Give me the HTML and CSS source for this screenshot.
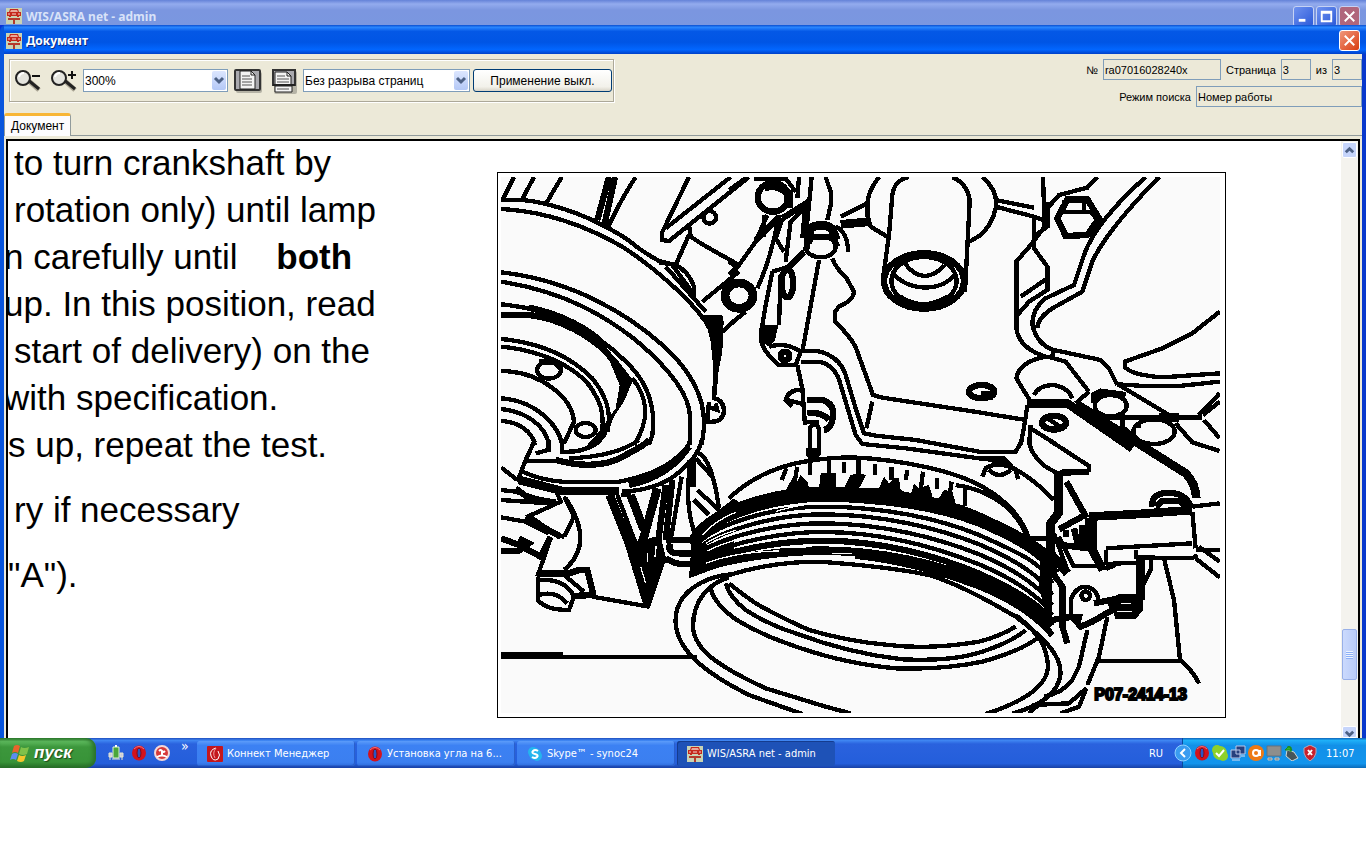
FILE: index.html
```html
<!DOCTYPE html>
<html lang="ru">
<head>
    <meta charset="UTF-8">
    <meta name="viewport" content="width=device-width, initial-scale=1.0">
    <title>WIS/ASRA net - admin</title>
    <link rel="stylesheet" href="styles.css">
</head>
<body>
    <svg class="defs" width="0" height="0" aria-hidden="true">
        <symbol id="car" viewBox="0 0 16 16">
            <rect width="16" height="16" fill="#c9d3b4"/>
            <path d="M4 1h8l1 3h2v4h-2v1h-2V8H5v1H3V8H1V4h2z" fill="#c5281c"/>
            <path d="M5 2h6l1 2H4z" fill="#e9a79a"/>
            <path d="M2 6h2M12 6h2M6 6h4" stroke="#f6d8d0" stroke-width="1"/>
            <path d="M2 11h12M8 11v5" stroke="#b53a2c" stroke-width="2"/>
        </symbol>
        <symbol id="opera" viewBox="0 0 16 16">
            <ellipse cx="8" cy="8" rx="7" ry="7.500" fill="#d3121c"/>
            <path d="M3 4q5-5 10 0" stroke="#f0777c" fill="none"/>
            <ellipse cx="8" cy="8" rx="2" ry="5" fill="#2b55c4"/>
            <ellipse cx="8" cy="8" rx="2" ry="5" fill="none" stroke="#8d0811"/>
        </symbol>
        <symbol id="chevron" viewBox="0 0 14 17">
            <path d="M3 6l4 4 4-4" fill="none" stroke="#4d6185" stroke-width="3"/>
        </symbol>
        <symbol id="cross" viewBox="0 0 20 20">
            <path d="M5 5l10 10M15 5L5 15" stroke="#fff" stroke-width="2"/>
        </symbol>
    </svg>

    <div class="desktop">
        <header class="titlebar titlebar-back">
            <svg class="icon"><use href="#car"/></svg>
            <span class="title">WIS/ASRA net - admin</span>
            <button class="win-btn" type="button" aria-label="Свернуть"><svg viewBox="0 0 20 20"><path d="M5 14h7" stroke="#fff" stroke-width="3"/></svg></button>
            <button class="win-btn" type="button" aria-label="Развернуть"><svg viewBox="0 0 20 20"><path d="M5 5h10v10H5zM5 6h10" fill="none" stroke="#fff" stroke-width="2"/></svg></button>
            <button class="win-btn win-close" type="button" aria-label="Закрыть"><svg><use href="#cross"/></svg></button>
        </header>

        <main class="window">
            <header class="titlebar">
                <svg class="icon"><use href="#car"/></svg>
                <h1 class="title">Документ</h1>
                <button class="win-btn win-close" type="button" aria-label="Закрыть"><svg><use href="#cross"/></svg></button>
            </header>

            <div class="content">
                <div class="head">
                    <div class="toolbar">
                        <button class="tool" type="button" aria-label="Уменьшить">
                            <svg viewBox="0 0 30 26"><path d="M16 13l10 9" stroke="#aaa595" stroke-width="5"/><path d="M15 12l11 9" stroke="#222" stroke-width="3"/><circle cx="10" cy="10" r="7" fill="#e4e4de" stroke="#222" stroke-width="2"/><path d="M6 9q1-4 5-4" stroke="#fff" stroke-width="2" fill="none"/><path d="M19 8h8" stroke="#111" stroke-width="2"/></svg>
                        </button>
                        <button class="tool" type="button" aria-label="Увеличить">
                            <svg viewBox="0 0 30 26"><path d="M16 13l10 9" stroke="#aaa595" stroke-width="5"/><path d="M15 12l11 9" stroke="#222" stroke-width="3"/><circle cx="10" cy="10" r="7" fill="#e4e4de" stroke="#222" stroke-width="2"/><path d="M6 9q1-4 5-4" stroke="#fff" stroke-width="2" fill="none"/><path d="M19 7h8M23 3v8" stroke="#111" stroke-width="2"/></svg>
                        </button>
                        <span class="combo combo-zoom">
                            <select aria-label="Масштаб"><option>300%</option></select>
                            <svg class="arrow"><use href="#chevron"/></svg>
                        </span>
                        <button class="tool tool-page" type="button" aria-label="Одна страница">
                            <svg viewBox="0 0 30 26"><rect x="3" y="4" width="26" height="21" rx="2" fill="#b5b3a6"/><rect x="2" y="2" width="25" height="20" rx="1" fill="#a9a9ae" stroke="#333" stroke-width="2"/><path d="M7 3h11l4 4v14H7z" fill="#f4f4f4" stroke="#222"/><path d="M18 3v4h4" fill="none" stroke="#222"/><path d="M9 8h8M9 11h10M9 14h10M9 17h10" stroke="#555"/></svg>
                        </button>
                        <button class="tool tool-page" type="button" aria-label="Непрерывно">
                            <svg viewBox="0 0 30 26"><rect x="5" y="3" width="23" height="23" rx="2" fill="#b5b3a6"/><rect x="4" y="2" width="22" height="15" fill="#a9a9ae" stroke="#333" stroke-width="2"/><path d="M6 4h12l4 4v9H6zM6 18h17v6H6z" fill="#f4f4f4" stroke="#222"/><path d="M18 4v4h4" fill="none" stroke="#222"/><path d="M8 8h8M8 11h12M8 14h12M8 21h12" stroke="#555"/><path d="M4 17h22" stroke="#222" stroke-width="2"/></svg>
                        </button>
                        <span class="combo combo-break">
                            <select aria-label="Разрыв страниц"><option>Без разрыва страниц</option></select>
                            <svg class="arrow"><use href="#chevron"/></svg>
                        </span>
                        <button class="apply" type="button">Применение выкл.</button>
                    </div>

                    <form class="info">
                        <div class="info-row">
                            <label for="number">№</label>
                            <input class="w-number" id="number" type="text" value="ra07016028240x" readonly>
                            <label for="page">Страница</label>
                            <input class="w-page" id="page" type="text" value="3" readonly>
                            <label for="total">из</label>
                            <input class="w-page" id="total" type="text" value="3" readonly>
                        </div>
                        <div class="info-row">
                            <label for="mode">Режим поиска</label>
                            <input class="w-mode" id="mode" type="text" value="Номер работы" readonly>
                        </div>
                    </form>
                </div>

                <nav class="tabs"><a class="tab" href="#document">Документ</a></nav>

                <div class="viewer" id="document">
                    <article class="page">
                        <div class="text">
                            <p>
                                <span class="line">to turn crankshaft by</span>
                                <span class="line">rotation only) until lamp</span>
                                <span class="line cut">n carefully until &nbsp;&nbsp; <b>both</b></span>
                                <span class="line cut">up. In this position, read</span>
                                <span class="line">start of delivery) on the</span>
                                <span class="line cut">with specification.</span>
                                <span class="line flush">s up, repeat the test.</span>
                            </p>
                            <p><span class="line">ry if necessary</span></p>
                            <p><span class="line flush">"A").</span></p>
                        </div>

                        <svg class="figure" viewBox="24 21 2187 1638" role="img" aria-label="P07-2414-13">
                            <defs>
                                <clipPath id="plate"><rect x="36" y="36" width="2157" height="1608"/></clipPath>
                            </defs>
                            <rect x="24" y="21" width="2187" height="1638" fill="#fff"/>
                            <rect x="36" y="36" width="2157" height="1608" fill="#fafafa"/>
                            <g class="ink" clip-path="url(#plate)">
                                <!-- flywheel, upper left -->
                                <g>
                                    <path d="M75 36L42 102M135 36L100 102M218 36L170 118M440 36Q395 105 358 185"/>
                                    <path class="bold" d="M360 36L325 165M378 36L345 185"/>
                                    <path d="M36 105H100Q150 110 190 122Q260 140 330 175T430 235T510 288L560 300"/>
                                    <path d="M36 132C200 140 330 205 400 245C500 310 600 400 650 470C690 530 680 600 675 700"/>
                                    <path d="M510 292L560 300Q600 320 615 365V395M530 305L650 440M550 300L612 385"/>
                                    <path class="solid" d="M645 450H700L704 470L700 560L690 612L672 600L665 530Z"/>
                                    <path d="M684 600L675 700Q705 705 705 740Q700 775 655 770L660 710M658 725L685 735L680 715"/>
                                    <path d="M600 36L518 205V225L540 228L780 36M725 36L530 190M600 180L605 215L640 238L750 300M600 210L560 300M640 410L750 320M700 500L750 455"/>
                                    <circle cx="662" cy="157" r="19"/>
                                    <path d="M36 322C250 345 420 450 520 540C610 620 650 700 645 790L638 840"/>
                                    <path d="M36 350C230 380 350 455 440 525C540 610 605 690 603 760V840"/>
                                    <path d="M36 418C200 430 340 520 400 580C475 645 502 720 490 810L480 840"/>
                                    <path class="bold" d="M36 450H120C220 460 310 520 350 560C380 590 400 630 405 650"/>
                                    <path d="M120 425C220 445 300 490 340 530M430 640C480 700 480 770 435 840"/>
                                    <path class="solid" d="M350 560L385 585L432 645L405 710L375 755L350 815L320 845H290L330 800L380 730L392 660Z"/>
                                    <path d="M36 522C180 535 260 590 310 640C350 690 370 740 355 800"/>
                                    <path d="M36 545C150 555 250 600 300 660C335 710 345 740 340 800"/>
                                    <ellipse cx="180" cy="615" rx="36" ry="26"/>
                                    <path class="bold" d="M150 590H195L218 610"/>
                                    <path d="M36 618C160 620 250 700 255 770L225 835"/>
                                    <path d="M36 700C130 705 205 770 220 840M36 732C110 740 170 780 180 840M36 768C90 770 130 800 138 840"/>
                                    <ellipse cx="290" cy="795" rx="30" ry="21"/>
                                </g>

                                <!-- bracket and bolts, upper centre -->
                                <g transform="translate(720 0)">
                                    <path d="M0 75L55 36M75 40H170L200 80M210 36L205 100M248 36L232 200M290 36L305 80V120L295 165"/>
                                    <ellipse class="bold" cx="132" cy="97" rx="46" ry="43"/>
                                    <path class="heavy" d="M105 68Q140 50 178 85V130"/>
                                    <path d="M115 150L80 230L30 300L0 330M105 150V215M150 150Q130 270 85 370M0 290L30 310M0 480L50 440"/>
                                    <path class="bold" d="M240 110L160 160M150 155L80 225"/>
                                    <path d="M160 160L140 220L165 260M225 130L185 170L170 290M228 130L220 220M130 320L110 420L100 480M225 260L180 305L130 320M155 330L150 480"/>
                                    <path class="bold" d="M225 262L175 310"/>
                                    <ellipse class="bold" cx="175" cy="355" rx="18" ry="42"/>
                                    <ellipse cx="275" cy="245" rx="45" ry="32"/>
                                    <path class="heavy" d="M237 235L243 190Q280 170 310 192L322 225"/>
                                    <path class="bold" d="M230 260L240 215H310L325 245"/>
                                    <path d="M320 185Q355 200 358 260M270 285L220 560"/>
                                    <path d="M310 280Q320 310 350 335L375 380Q375 405 330 425L318 440V470Q375 525 385 560L432 690L460 698L750 742L890 765M430 710L412 790"/>
                                    <path class="solid" d="M92 480H148L138 525L120 545L90 525Z"/>
                                    <path d="M95 520Q100 560 150 600H200L215 560Q170 530 120 545"/>
                                    <circle class="bold" cx="168" cy="573" r="13"/>
                                    <path d="M215 557H260Q330 570 350 630L380 730L405 805L440 812L560 825L750 860"/>
                                    <path d="M215 590H270Q320 600 335 660L380 810L400 837L530 850L750 880"/>
                                    <path d="M205 600L220 670L228 780M225 675Q180 670 170 705L190 725M175 705L225 718"/>
                                    <path class="bold" d="M235 705H280Q315 715 312 750Q310 790 285 795M235 745Q280 740 300 765"/>
                                    <path d="M242 865V790Q255 765 270 790V865M222 770H270"/>
                                    <path class="solid" d="M230 850H275V868L258 890L243 890L230 868Z"/>
                                    <ellipse class="heavy" cx="30" cy="392" rx="42" ry="38"/>
                                    <path d="M450 36Q415 80 415 120V150L425 185L475 215M335 155L415 115"/>
                                    <path class="heavy" d="M335 178L425 170"/>
                                    <path d="M540 36Q495 45 490 90L480 210L462 340M670 36Q720 60 722 110L708 380M722 230L755 210"/>
                                    <ellipse class="bold" cx="585" cy="348" rx="120" ry="83"/>
                                    <ellipse cx="585" cy="348" rx="98" ry="72"/>
                                    <path class="heavy" d="M510 400Q580 448 660 400"/>
                                    <path d="M490 320Q520 365 590 368Q650 365 675 330M525 290Q550 330 585 333Q620 333 645 300"/>
                                    <path class="bold" d="M550 268H620"/>
                                </g>

                                <!-- housing and hose, upper right -->
                                <g transform="translate(1470 0)">
                                    <path d="M10 36Q60 80 50 130Q40 180 0 215M50 105L165 128M50 125L165 155L205 170M192 36L197 185L155 240L112 290V490Q120 550 200 575"/>
                                    <path d="M165 155V250L205 305V375L150 410L115 450M125 395L205 340M170 210L205 185V110"/>
                                    <path d="M355 36L325 68L240 90L205 130"/>
                                    <path class="bold" d="M235 160L265 103H325L360 160L325 210L260 213Z"/>
                                    <path d="M240 140H335L355 165M255 105V135M315 105V135"/>
                                    <path d="M500 36Q350 170 315 270L285 360L200 400Q160 430 160 480Q175 540 225 555L365 585L390 610L415 660"/>
                                    <path d="M540 36Q380 200 340 290L310 380L220 430Q175 460 175 490"/>
                                    <path d="M225 555L218 578L260 590L330 680M180 575H220M200 575Q120 590 112 640L155 710"/>
                                    <path d="M722 440L640 505L550 550L437 590V605Q455 630 550 637L722 625M415 658L480 662H610L722 650"/>
                                    <path d="M165 690Q180 660 225 660Q270 670 280 700"/>
                                    <path class="heavy" d="M145 715H265L460 850"/>
                                    <path class="heavy" d="M290 715L430 805L620 925Q650 955 652 1000"/>
                                    <ellipse class="bold" cx="225" cy="773" rx="36" ry="21"/>
                                    <path d="M205 760L250 790M145 720L138 770L125 840M155 780L150 840M155 790L235 840"/>
                                    <ellipse cx="395" cy="722" rx="48" ry="32"/>
                                    <path class="bold" d="M345 715V690L365 680L440 690"/>
                                    <path d="M290 715L330 680M380 757H670M420 660L570 750"/>
                                    <ellipse cx="525" cy="800" rx="62" ry="37"/>
                                    <path d="M430 740V785L470 820M480 770V790M590 775L640 832L722 858M660 750L722 685M672 750L722 710M675 765L722 820"/>
                                    <path class="heavy" d="M540 757H600"/>
                                    <ellipse class="bold" cx="8" cy="680" rx="38" ry="20"/>
                                    <path d="M5 685H35V705"/>
                                </g>

                                <!-- hub edge, bracket and bolt, lower left -->
                                <g transform="translate(0 825)">
                                    <path d="M138 0L110 60L85 125M178 0V30L140 40M218 0V35Q290 40 335 0M110 62H200M240 55Q380 50 450 0"/>
                                    <path class="bold" d="M200 60Q330 95 410 45Q460 20 482 0"/>
                                    <path d="M100 95Q160 122 220 125H390Q500 105 560 55Q600 25 603 0M638 0Q630 50 560 105Q500 150 400 155"/>
                                    <path class="heavy" d="M90 120L220 153H390"/>
                                    <path class="bold" d="M600 20Q540 110 420 135"/>
                                    <path d="M36 82L85 120M36 150L80 155L200 192M36 180L205 192M200 150L215 185L120 228L160 255L205 285L225 290M36 232L110 245L180 280"/>
                                    <path class="bold" d="M36 295L90 315L155 350L185 290M36 332H90L120 310L90 295M110 230L160 260L215 290M80 145L120 175L200 188"/>
                                    <path d="M225 170Q260 230 250 240L225 290M230 175Q320 310 225 390M185 295L145 410"/>
                                    <path class="bold" d="M150 400H240L270 390H295L310 450V465L250 468"/>
                                    <path d="M147 410V480Q170 510 240 510L255 470Q230 415 150 420M150 465Q200 450 235 490M225 405L285 455"/>
                                    <path d="M310 470L480 500"/>
                                    <path class="heavy" d="M362 165L420 310L475 490"/>
                                    <path d="M385 165L440 310M395 165H420L465 250"/>
                                    <path class="heavy" d="M425 165L465 270M505 145L465 290L450 330"/>
                                    <path class="solid" d="M425 310L500 290L512 340L527 370L482 505H465Z"/>
                                    <path class="gap" d="M505 290L498 350M455 380L470 430M475 340V365"/>
                                    <path class="bold" d="M530 135L508 300L525 370M550 120L530 300"/>
                                    <path d="M578 110L545 300M600 100Q590 200 615 275M630 40Q670 60 690 205M620 55L670 110M615 180L660 225M625 150L690 210"/>
                                    <path class="heavy" d="M608 60V140"/>
                                    <path class="bold" d="M530 300H605M545 310Q530 340 570 340H605M530 355Q570 380 610 370"/>
                                    <path class="bold" d="M36 646H222"/>
                                    <path d="M220 651H625"/>
                                </g>

                                <!-- pulley grooves -->
                                <g>
                                    <path class="heavy" d="M612 1125C650 1040 850 978 1000 978C1180 978 1350 1000 1470 1055C1570 1100 1670 1150 1700 1200"/>
                                    <path class="heavy" d="M612 1140C650 1060 850 998 1000 998C1180 998 1350 1025 1470 1072C1570 1115 1660 1160 1700 1225"/>
                                    <path d="M615 1150C660 1080 850 1025 1000 1025C1180 1025 1350 1060 1470 1110C1570 1155 1660 1190 1690 1255"/>
                                    <path d="M615 1165C660 1105 850 1048 1000 1048C1180 1048 1350 1090 1470 1138C1570 1180 1655 1230 1690 1290"/>
                                    <path d="M615 1180C660 1125 850 1075 1000 1075C1180 1075 1350 1120 1470 1168C1570 1210 1650 1260 1690 1320"/>
                                    <path d="M615 1195C660 1150 850 1101 1000 1101C1180 1101 1350 1150 1470 1198C1570 1240 1650 1290 1690 1350"/>
                                    <path class="bold" d="M615 1210C660 1170 850 1127 1000 1127C1180 1127 1350 1175 1470 1226C1570 1270 1650 1315 1690 1370"/>
                                    <path class="heavy" d="M610 1225C660 1190 850 1157 1000 1157C1180 1157 1350 1200 1470 1248C1570 1290 1640 1325 1685 1385"/>
                                    <path class="bold" d="M1100 1172C1250 1190 1350 1220 1470 1264C1570 1305 1640 1350 1690 1410"/>
                                    <path class="solid" d="M608 1130L650 1065L735 1000L760 1020L640 1110L620 1150L735 1120V1190L600 1240Z"/>
                                    <path class="solid" d="M1655 1170L1690 1220V1370L1670 1400L1640 1350L1665 1330L1650 1260Z"/>
                                    <path class="gap" d="M640 1110Q680 1065 740 1042M650 1135Q690 1110 740 1096M655 1158Q690 1140 740 1125M650 1195Q740 1160 870 1158M930 977H1065M1030 1165H1090M895 1148H950M860 1040Q950 1008 1080 1012"/>
                                    <path d="M720 1000C810 915 920 880 1090 877C1250 885 1400 920 1480 965C1560 1010 1600 1060 1620 1120H1680"/>
                                    <path d="M1400 960Q1560 985 1615 1115"/>
                                </g>

                                <!-- timing scale, pulley rim -->
                                <g transform="translate(720 825)">
                                    <path d="M172 85L158 120M205 80L195 135M243 40V105M300 55V150M345 65V100M388 60V110M437 72V105M487 80V120M535 90L530 120M582 95L575 150M624 115V148M668 125L660 175M708 145V198"/>
                                    <path class="solid" d="M170 150L190 115L205 125L215 105L235 125L240 145H270L275 100H320V145H345L365 105L388 100L412 105L390 145H450L465 110L480 130L495 115H510L515 150L545 165L555 130L570 145L600 135L612 175H630L645 150L670 155L680 190L705 215L560 180L350 160L160 170Z"/>
                                    <path d="M0 405Q130 365 270 365Q480 380 600 405Q700 435 860 530C940 590 995 640 995 700C990 760 930 800 850 820"/>
                                    <path d="M10 402C-80 410 -165 460 -160 550C-155 640 -50 710 60 765L220 822"/>
                                    <path d="M0 412C-60 430 -108 480 -108 560C-105 630 -30 680 110 745L290 800L365 820M860 525C930 580 955 620 957 680C955 730 900 780 770 822"/>
                                    <path d="M0 430Q30 455 80 490Q150 530 240 570Q360 605 480 615Q600 630 750 605Q810 590 860 560"/>
                                    <path d="M-10 430Q0 470 50 510Q120 555 200 580Q360 640 520 658Q670 665 760 635Q850 605 890 570M-55 445Q-45 490 20 538Q90 580 160 605Q330 670 500 685Q640 690 760 665Q870 635 925 595"/>
                                </g>

                                <!-- tensioner and sender, lower right -->
                                <g transform="translate(1470 825)">
                                    <path d="M0 35H60L110 35L130 0M152 0Q150 40 200 80L235 100M210 0L330 78V95M0 55Q110 60 225 180"/>
                                    <path class="bold" d="M235 108L250 98L330 95"/>
                                    <path d="M10 110L20 85Q60 60 110 90L117 118M30 90Q60 120 95 90M0 55H75L100 80"/>
                                    <path class="heavy" d="M238 100V220L215 250V340L265 400"/>
                                    <path class="bold" d="M262 125L318 225L240 268"/>
                                    <path class="heavy" d="M330 230L480 222L640 210"/>
                                    <path d="M640 200L722 190M640 215L650 325M650 330H722M660 320L722 365M650 355L722 412"/>
                                    <path class="bold" d="M520 200Q515 160 570 158Q620 160 635 200M530 200L550 183H600L625 200"/>
                                    <path d="M380 325L640 310M470 330V352L640 355L655 345M380 372L475 368"/>
                                    <path class="bold" d="M260 270V290M285 265L298 320M310 255V310L345 330M245 315L330 325"/>
                                    <path d="M325 235V330M240 290L285 380M225 280L265 390"/>
                                    <path class="heavy" d="M340 240V330L372 390"/>
                                    <path d="M380 330V375M280 378H350L385 385L410 375"/>
                                    <path class="heavy" d="M484 355V480"/>
                                    <path d="M515 355V390L490 440M555 355L585 480L603 660M350 662H605Q640 690 660 730"/>
                                    <circle cx="320" cy="467" r="13"/>
                                    <path d="M275 530V480Q290 440 320 440Q355 445 358 480"/>
                                    <path class="bold" d="M345 490L395 480L400 510L340 545L305 560L280 530H300L295 550"/>
                                    <path class="solid" d="M390 475L420 462H492V510L470 538H410Z"/>
                                    <path class="gap" d="M425 490H455M415 515H460"/>
                                    <path d="M385 530L360 650L325 735M325 570L300 680L280 720Q250 760 195 770M160 795L270 790L322 745L300 800L245 820M150 820L200 775"/>
                                    <path class="bold" d="M215 390L250 440V560L265 610M220 540L280 530"/>
                                    <path class="gap" d="M232 430V510M235 550L248 590"/>
                                </g>
                            </g>
                            <text class="plate-no" x="1816" y="1606">P07-2414-13</text>
                        </svg>
                    </article>

                    <div class="scrollbar">
                        <button class="scroll-btn" type="button" aria-label="Вверх"><svg viewBox="0 0 14 14"><path d="M3 9l4-4 4 4" fill="none" stroke="#4d6185" stroke-width="3"/></svg></button>
                        <div class="track"><div class="thumb"></div></div>
                        <button class="scroll-btn scroll-down" type="button" aria-label="Вниз"><svg viewBox="0 0 14 14"><path d="M3 5l4 4 4-4" fill="none" stroke="#4d6185" stroke-width="3"/></svg></button>
                    </div>
                </div>
            </div>
        </main>

        <footer class="taskbar">
            <button class="start" type="button">
                <svg viewBox="0 0 20 18"><path d="M4 2q3-2 6 0L8 9Q5 7 2 9z" fill="#e8642c"/><path d="M11 3q3 2 8 0l-2 7q-4 2-8 0z" fill="#7fc14a"/><path d="M2 10q3-2 6 0l-2 6q-3-2-6 0z" fill="#5b8df0"/><path d="M9 11q3 2 7 0l-2 6q-3 2-7 0z" fill="#f5c62c"/></svg>
                пуск
            </button>
            <div class="quick">
                <a href="#connect" aria-label="Коннект"><svg viewBox="0 0 16 16"><path d="M5 2h6v11H5z" fill="#4aa63a" stroke="#dff3d2"/><path d="M7 0h2v2H7z" fill="#fff"/><path d="M1 8h3v4H1zM12 8h3v4h-3zM2 12v3M14 12v3M4 14h8" fill="#ccd" stroke="#e6e6d0"/></svg></a>
                <a href="#opera-web" aria-label="Opera"><svg><use href="#opera"/></svg></a>
                <a href="#dialer" aria-label="Дозвон"><svg viewBox="0 0 16 16"><circle cx="8" cy="8" r="7" fill="#d63a3a" stroke="#f4d7d7" stroke-width="2"/><path d="M5 6q2-2 3 0t3 0M8 6v4M3 12q5-3 10 0" stroke="#fff" stroke-width="2" fill="none"/></svg></a>
                <span class="more">»</span>
            </div>
            <nav class="tasks">
                <button class="task" type="button"><svg viewBox="0 0 16 16"><rect width="16" height="16" rx="1" fill="#c4161c"/><path d="M9 2Q2 4 4 10t7 3q3-4 0-8" fill="none" stroke="#fff"/><path d="M9 2q-4 5-1 10" stroke="#f0a0a0" fill="none"/></svg>Коннект Менеджер</button>
                <button class="task" type="button"><svg><use href="#opera"/></svg>Установка угла на 6...</button>
                <button class="task" type="button"><svg viewBox="0 0 16 16"><circle cx="6" cy="6" r="5" fill="#25b5ee"/><circle cx="10" cy="10" r="5" fill="#25b5ee"/><circle cx="8" cy="8" r="6" fill="#25b5ee"/><path d="M11 5Q8 3 6 5t2 3 2 3-5 0" fill="none" stroke="#fff" stroke-width="2"/></svg>Skype™ - synoc24</button>
                <button class="task task-active" type="button"><svg><use href="#car"/></svg>WIS/ASRA net - admin</button>
            </nav>
            <span class="lang">RU</span>
            <div class="tray">
                <button class="expand" type="button" aria-label="Показать значки"><svg viewBox="0 0 18 18"><circle cx="9" cy="9" r="8" fill="#3a9cf0" stroke="#8fd0ff"/><path d="M11 5L7 9l4 4" stroke="#fff" stroke-width="2" fill="none"/></svg></button>
                <svg><use href="#opera"/></svg>
                <svg viewBox="0 0 16 16"><circle cx="5" cy="5" r="5" fill="#8ed12a"/><circle cx="11" cy="11" r="5" fill="#8ed12a"/><circle cx="8" cy="8" r="7" fill="#8ed12a"/><path d="M4 8l3 3 5-6" stroke="#fff" stroke-width="2" fill="none"/></svg>
                <svg viewBox="0 0 16 16"><path d="M6 1h9v8H6zM1 5h9v8H1z" fill="#27407e" stroke="#bcc8e8"/><path d="M2 15h8M11 11h4" stroke="#dde"/></svg>
                <svg viewBox="0 0 16 16"><circle cx="8" cy="8" r="8" fill="#ee7a14"/><circle cx="8" cy="8" r="3" fill="none" stroke="#fff" stroke-width="2"/><path d="M12 5v6" stroke="#fff" stroke-width="2"/></svg>
                <svg viewBox="0 0 16 16"><path d="M1 1h14v10H1z" fill="#8e8e8c" stroke="#66727c"/><path d="M2 13h4v2H2zM9 13h4v2H9z" fill="#777" stroke="#c5c5c0"/></svg>
                <svg viewBox="0 0 16 16"><path d="M3 5l7 2 4 6-6 3-6-5z" fill="#46555a" stroke="#cfd8d8"/><path d="M3 2h4v5M1 5l4-4 3 4z" fill="#2eb42e" stroke="#1c8a1c"/></svg>
                <svg viewBox="0 0 16 16"><path d="M8 0l6 3v5q-1 5-6 8-5-3-6-8V3z" fill="#c9202c" stroke="#b9a8b8"/><path d="M6 5l4 5M10 5l-4 5" stroke="#fff" stroke-width="2"/></svg>
                <time class="clock">11:07</time>
            </div>
        </footer>
    </div>
</body>
</html>
```
FILE: styles.css
```css
* {
    box-sizing: border-box;
}

body {
    margin: 0;
    background: #fff;
    font-family: "Liberation Sans", Arial, sans-serif;
    font-size: 12px;
    color: #000;
}

button {
    padding: 0;
    border: 0;
    background: none;
    font: inherit;
}

.defs {
    position: absolute;
}

.desktop {
    display: flex;
    flex-direction: column;
    background: #0831d9;
}

/* title bars */
.titlebar {
    display: flex;
    align-items: center;
    gap: 4px;
    height: 29px;
    padding: 2px 6px 0 2px;
    background: linear-gradient(#0a4fd0, #2a86ff 8%, #0458e6 22%, #0055e5 60%, #0266ff 85%, #0040c8);
    color: #fff;
}

.titlebar-back {
    height: 25px;
    padding: 7px 6px 0 6px;
    background: linear-gradient(#6482d8, #93abee 16%, #7b96e0 40%, #7a97e0);
    color: #d8e2f8;
    overflow: hidden;
}

.title {
    flex: 1;
    margin: 0;
    font: bold 12px "Noto Sans", sans-serif;
}

.window .title {
    text-shadow: 1px 1px #0a2a80;
}

.icon {
    width: 16px;
    height: 16px;
}

.win-btn {
    width: 21px;
    height: 21px;
    border: 1px solid #fff;
    border-radius: 3px;
    background: linear-gradient(135deg, #6f92f0, #2c5ad8);
}

.win-btn svg {
    display: block;
    width: 19px;
    height: 19px;
}

.win-close {
    background: linear-gradient(135deg, #f0977c, #d93c10);
}

.titlebar-back .win-btn {
    border-color: #c6d2f4;
    margin-left: -2px;
}

.titlebar-back .win-close {
    background: #b0667c;
}

/* window */
.window {
    padding: 0 0 0 4px;
    border-right: 4px solid #0838cc;
    background: #0855dd;
    border-radius: 6px 0 0 0;
}

.window .titlebar {
    margin-right: -4px;
}

.content {
    background: #ece9d8;
}

.head {
    display: flex;
    justify-content: space-between;
    align-items: flex-start;
    padding: 5px 0 0 5px;
}

.toolbar {
    display: flex;
    align-items: center;
    gap: 3px;
    height: 43px;
    padding: 0 1px;
    border: 1px solid #aca899;
    box-shadow: inset 1px 1px #fff, 1px 1px #fff;
}

.tool {
    width: 33px;
    height: 28px;
}

.tool svg {
    display: block;
    width: 30px;
    height: 26px;
    margin: auto;
}

.combo {
    position: relative;
}

.combo select {
    width: 100%;
    height: 23px;
    padding: 0 1px;
    border: 1px solid #7f9db9;
    border-radius: 0;
    background: #fff;
    font: inherit;
    appearance: none;
}

.combo-zoom {
    width: 145px;
}

.combo-break {
    width: 167px;
}

.arrow {
    position: absolute;
    top: 2px;
    right: 2px;
    width: 14px;
    height: 19px;
    background: linear-gradient(#dce6fe, #b4c8f6);
    border-radius: 2px;
    pointer-events: none;
}

.apply {
    width: 139px;
    height: 23px;
    border: 1px solid #003c74;
    border-radius: 3px;
    background: linear-gradient(#fff, #f2f1ea 80%, #d8d4c8);
}

.info {
    display: flex;
    flex-direction: column;
    align-items: flex-end;
    gap: 6px;
    font-size: 11px;
}

.info-row {
    display: flex;
    align-items: center;
    gap: 5px;
}

.info input {
    height: 21px;
    padding: 0 1px;
    border: 1px solid #7f9db9;
    background: #ece9d8;
    font: inherit;
}

.info .w-number {
    width: 118px;
}

.info .w-page {
    width: 30px;
}

.info .w-mode {
    width: 166px;
}

.tabs {
    display: flex;
    height: 29px;
    align-items: flex-end;
    border-bottom: 1px solid #919b9c;
}

.tab {
    height: 23px;
    padding: 2px 6px;
    margin-bottom: -1px;
    border: 1px solid #919b9c;
    border-top: 3px solid #f8b636;
    border-bottom: 0;
    border-radius: 3px 3px 0 0;
    background: #fcfcfe;
    color: #000;
    line-height: 16px;
    text-decoration: none;
}

/* document viewer */
.viewer {
    display: flex;
    margin-top: 3px;
    margin-left: 2px;
    margin-right: 2px;
    border: 2px solid #000;
    border-bottom: 0;
    background: #fff;
}

.page {
    display: flex;
    flex: 1;
    align-items: flex-start;
    overflow: hidden;
}

.text {
    flex: none;
    width: 489px;
    margin-top: -2px;
    font-size: 35px;
    line-height: 47px;
    white-space: nowrap;
}

.text p {
    margin: 0 0 18px;
}

.line {
    display: block;
    padding-left: 6px;
}

.cut {
    padding-left: 0;
    text-indent: -4px;
}

.flush {
    padding-left: 0;
}

.figure {
    flex: none;
    width: 729px;
    height: 546px;
    margin: 31px 0 20px;
    outline: 1px solid #000;
    outline-offset: -1px;
}

.ink {
    fill: none;
    stroke: #000;
    stroke-width: 13px;
    shape-rendering: crispEdges;
}

.ink .bold {
    stroke-width: 19px;
}

.ink .heavy {
    stroke-width: 26px;
}

.ink .solid {
    fill: #000;
    stroke: none;
}

.ink .gap {
    stroke: #fafafa;
    stroke-width: 4px;
}

.plate-no {
    font-size: 48px;
    font-weight: bold;
    stroke: #000;
    stroke-width: 6px;
}

.scrollbar {
    display: flex;
    flex-direction: column;
    width: 17px;
    background: #f4f3ee;
}

.scroll-btn {
    width: 15px;
    height: 16px;
    margin: 1px;
    border: 1px solid #fff;
    border-radius: 2px;
    background: #c6d5fb;
}

.scroll-down {
    height: 12px;
    margin-bottom: 0;
}

.scroll-btn svg {
    display: block;
    width: 13px;
    height: 13px;
}

.track {
    display: flex;
    flex: 1;
    flex-direction: column;
    justify-content: flex-end;
    padding-bottom: 45px;
}

.thumb {
    width: 15px;
    height: 51px;
    margin: 0 1px;
    border: 1px solid #98b0e8;
    border-radius: 2px;
    background: repeating-linear-gradient(#eef4fe 0 1px, #8cb0f8 1px 2px) center / 7px 8px no-repeat, linear-gradient(90deg, #cbdafd, #b8cbf8);
}

/* taskbar */
.taskbar {
    display: flex;
    align-items: stretch;
    height: 30px;
    background: linear-gradient(#1f4fbf, #3f86f2 8%, #2a62de 20%, #245edb 85%, #1941a5);
    color: #fff;
    font-family: "DejaVu Sans Condensed", "DejaVu Sans", sans-serif;
    font-size: 11px;
}

.start {
    display: flex;
    align-items: center;
    gap: 4px;
    width: 96px;
    padding-left: 10px;
    border-radius: 0 10px 10px 0;
    background: linear-gradient(#2f7d2f, #5cb85c 12%, #3c973c 30%, #389338 80%, #256b25);
    box-shadow: inset -3px 0 4px #2a702a;
    color: #fff;
    font: italic bold 17px "Liberation Sans", sans-serif;
    text-shadow: 1px 1px 1px #1b4a1b;
}

.start svg {
    width: 20px;
    height: 18px;
}

.quick {
    display: flex;
    align-items: center;
    gap: 7px;
    width: 101px;
    padding-left: 12px;
}

.quick svg {
    display: block;
    width: 16px;
    height: 16px;
}

.more {
    margin-left: 4px;
    align-self: flex-start;
    font-size: 14px;
}

.tasks {
    display: flex;
    flex: 1;
    gap: 2px;
    padding: 3px 0 2px;
}

.task {
    display: flex;
    align-items: center;
    gap: 4px;
    width: 158px;
    padding-left: 10px;
    border-radius: 3px;
    background: linear-gradient(#5c9cfa, #3c81f3 18%, #3b7ff0 85%, #2f6cdc);
    box-shadow: inset -1px -1px #2a5fca;
    color: #fff;
}

.task svg {
    width: 16px;
    height: 16px;
}

.task-active {
    background: #1e52b7;
    box-shadow: inset 1px 1px #153c8e;
}

.lang {
    align-self: center;
    margin-right: 19px;
}

.tray {
    display: flex;
    align-items: center;
    gap: 2px;
    width: 184px;
    background: linear-gradient(#0f62b8, #1fb0f8 8%, #1290e8 25%, #1294ec 85%, #0b6ab8);
    border-left: 1px solid #0a4a9c;
}

.tray svg {
    width: 16px;
    height: 16px;
}

.tray .expand {
    margin-left: -9px;
}

.tray .expand svg {
    display: block;
    width: 18px;
    height: 18px;
}

.clock {
    margin-left: 6px;
}
```
